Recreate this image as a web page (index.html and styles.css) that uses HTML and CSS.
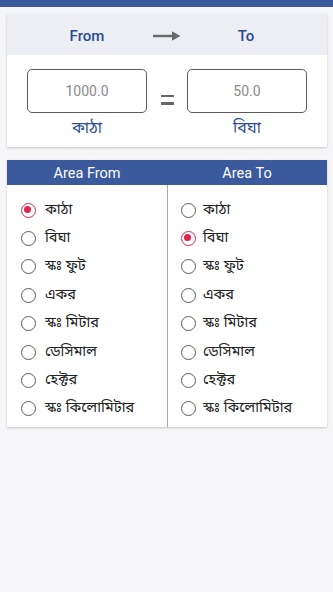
FILE: index.html
```html
<!DOCTYPE html>
<html lang="bn">
<head>
<meta charset="utf-8">
<link rel="stylesheet" href="styles.css">
</head>
<body>
<div class="topbar"></div>
<main class="content">
  <section class="card conv">
    <div class="conv-head">
      <span class="head-label">From</span>
      <svg class="arrow" width="30" height="12" viewBox="0 0 30 12"><path d="M1 6H25" stroke="#6a6a6a" stroke-width="2.4"/><path d="M20 1.2L28.5 6L20 10.8Z" fill="#6a6a6a"/></svg>
      <span class="head-label">To</span>
    </div>
    <div class="conv-body">
      <div class="field">
        <div class="box">1000.0</div>
        <div class="unit">কাঠা</div>
      </div>
      <div class="eq"><span></span><span></span></div>
      <div class="field">
        <div class="box">50.0</div>
        <div class="unit">বিঘা</div>
      </div>
    </div>
  </section>

  <section class="card lists">
    <div class="list-head">
      <div>Area From</div>
      <div>Area To</div>
    </div>
    <div class="list-body">
      <ul class="col left">
        <li><span class="radio on"></span>কাঠা</li>
        <li><span class="radio"></span>বিঘা</li>
        <li><span class="radio"></span>স্কঃ ফুট</li>
        <li><span class="radio"></span>একর</li>
        <li><span class="radio"></span>স্কঃ মিটার</li>
        <li><span class="radio"></span>ডেসিমাল</li>
        <li><span class="radio"></span>হেক্টর</li>
        <li><span class="radio"></span>স্কঃ কিলোমিটার</li>
      </ul>
      <ul class="col right">
        <li><span class="radio"></span>কাঠা</li>
        <li><span class="radio on"></span>বিঘা</li>
        <li><span class="radio"></span>স্কঃ ফুট</li>
        <li><span class="radio"></span>একর</li>
        <li><span class="radio"></span>স্কঃ মিটার</li>
        <li><span class="radio"></span>ডেসিমাল</li>
        <li><span class="radio"></span>হেক্টর</li>
        <li><span class="radio"></span>স্কঃ কিলোমিটার</li>
      </ul>
    </div>
  </section>
</main>
</body>
</html>
```

FILE: styles.css
```css
* { box-sizing: border-box; }
html, body { margin: 0; padding: 0; }
body {
  width: 333px;
  height: 592px;
  background: #f6f6f8;
  font-family: Roboto, "Noto Sans", "Noto Sans Bengali", sans-serif;
  overflow: hidden;
}
.topbar {
  height: 7px;
  background: #3b5a9c;
}
.content {
  padding: 7px 6px 0 7px;
}
.card {
  background: #ffffff;
  box-shadow: 0 1px 2px rgba(0,0,0,0.2);
}
.conv-head {
  height: 41px;
  background: #eceef4;
  display: grid;
  grid-template-columns: 120px 39px 120px;
  align-items: center;
  justify-items: center;
  padding: 3px 20px 0;
}
.head-label {
  color: #2a4b94;
  font-weight: 500;
  font-size: 15px;
}
.arrow { display: block; }
.conv-body {
  display: flex;
  align-items: flex-start;
  justify-content: space-between;
  padding: 14px 20px 0 20px;
  height: 92px;
}
.field {
  width: 120px;
  display: flex;
  flex-direction: column;
  align-items: center;
}
.box {
  width: 120px;
  height: 44px;
  border: 1.3px solid #5a5a5a;
  border-radius: 5px;
  display: flex;
  align-items: center;
  justify-content: center;
  color: #8a8a8a;
  font-size: 14px;
}
.unit {
  margin-top: 5px;
  color: #2f4f95;
  font-size: 16px;
}
.eq {
  width: 13px;
  margin-top: 26px;
  display: flex;
  flex-direction: column;
  gap: 5px;
}
.eq span {
  display: block;
  height: 2.4px;
  background: #666666;
}
.lists {
  margin-top: 13px;
}
.list-head {
  height: 25px;
  background: #3a5a9d;
  color: #ffffff;
  display: grid;
  grid-template-columns: 160px 160px;
  align-items: center;
  text-align: center;
  font-size: 14.5px;
  padding-top: 2px;
}
.list-body {
  display: grid;
  grid-template-columns: 160px 1fr;
}
.col {
  list-style: none;
  margin: 0;
  padding: 11px 0 4px 14px;
}
.col.right {
  border-left: 1px solid #a8a8a8;
  padding-left: 13px;
}
.col li {
  height: 28.4px;
  display: flex;
  align-items: center;
  font-size: 14.5px;
  color: #222;
}
.radio {
  width: 15px;
  height: 15px;
  border: 1.7px solid #5c5c5c;
  border-radius: 50%;
  margin-right: 9px;
  flex: none;
  position: relative;
}
.right .radio { margin-right: 7px; }
.radio.on {
  border-color: #e0244f;
}
.radio.on::after {
  content: "";
  position: absolute;
  left: 2.3px;
  top: 2.3px;
  width: 7px;
  height: 7px;
  border-radius: 50%;
  background: #e0244f;
}
```
